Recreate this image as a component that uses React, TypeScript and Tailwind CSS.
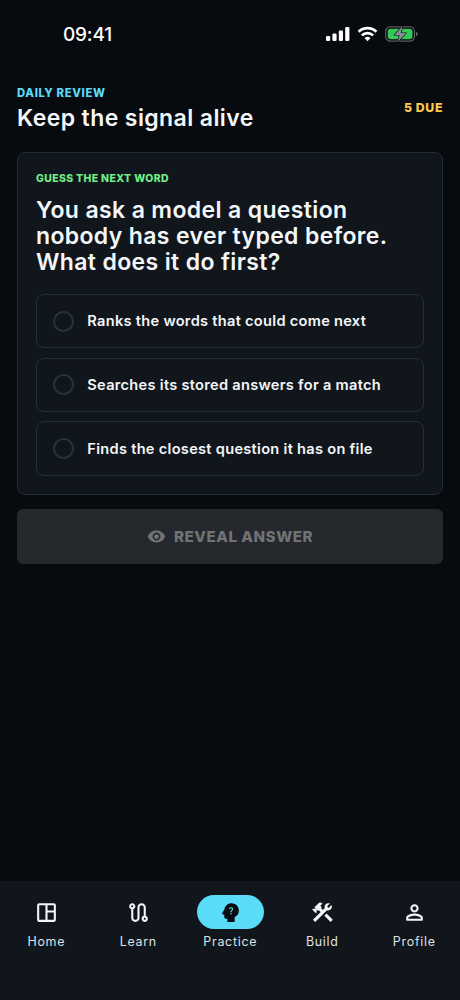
import React, { useState } from "react";
import type { IconType } from "react-icons";
import {
  MdConstruction,
  MdOutlineRoute,
  MdOutlineSpaceDashboard,
  MdPsychologyAlt,
  MdVisibility,
} from "react-icons/md";

interface Tab {
  label: string;
  icon: IconType;
}

const PersonIcon: IconType = ({ size = 24 }) => (
  <svg width={size} height={size} viewBox="0 0 24 24" fill="currentColor">
    <path d="M12 6c1.1 0 2 .9 2 2s-.9 2-2 2-2-.9-2-2 .9-2 2-2m0 9c2.7 0 5.8 1.29 6 2v1H6v-.99c.2-.72 3.3-2.01 6-2.01m0-11C9.79 4 8 5.79 8 8s1.79 4 4 4 4-1.79 4-4-1.79-4-4-4zm0 9c-2.67 0-8 1.34-8 4v2c0 .55.45 1 1 1h14c.55 0 1-.45 1-1v-2c0-2.66-5.33-4-8-4z" />
  </svg>
);

const tabs: Tab[] = [
  { label: "Home", icon: MdOutlineSpaceDashboard },
  { label: "Learn", icon: MdOutlineRoute },
  { label: "Practice", icon: MdPsychologyAlt },
  { label: "Build", icon: MdConstruction },
  { label: "Profile", icon: PersonIcon },
];

const answers = [
  "Ranks the words that could come next",
  "Searches its stored answers for a match",
  "Finds the closest question it has on file",
];

const StatusBar = () => (
  <div className="flex h-[68px] shrink-0 items-center justify-between pl-[63px] pr-[42px]">
    <span className="pt-px text-[19px] font-medium leading-6 tracking-[-0.2px] text-white">09:41</span>
    <div className="flex items-center gap-[7.5px]">
      <svg width="24" height="16" viewBox="0 0 24 16" fill="#fff">
        <rect x="0" y="10" width="4.2" height="5" rx="1.2" />
        <rect x="6.4" y="7.5" width="4.2" height="7.5" rx="1.2" />
        <rect x="12.8" y="4.5" width="4.2" height="10.5" rx="1.2" />
        <rect x="19.2" y="1" width="4.2" height="14" rx="1.2" />
      </svg>
      <svg width="20" height="16" viewBox="0.5 0 20 16" fill="none" stroke="#fff" strokeWidth="2.7">
        <path d="M1.1 5.8a12.7 12.7 0 0 1 17.8 0" />
        <path d="M4.4 9.4a8 8 0 0 1 11.2 0" />
        <path d="M10 15.2 7 12.1a4.4 4.4 0 0 1 6 0z" fill="#fff" stroke="none" />
      </svg>
      <svg width="33" height="16" viewBox="0 0 33 16">
        <rect x="0.7" y="0.9" width="28.8" height="14.2" rx="4.6" fill="none" stroke="#5b5e62" strokeWidth="1.2" />
        <path d="M31 5.9c1.1.4 1.6 1.2 1.6 2.2s-.5 1.8-1.6 2.2z" fill="#6b6e72" />
        <rect x="2.7" y="2.8" width="24.8" height="10.4" rx="3" fill="#34c759" />
        <path
          d="M17.6 0 9.4 9h5.2l-1.8 7L21 7h-5.2z"
          fill="#8b8e91"
          stroke="#070a0e"
          strokeWidth="1.2"
          paintOrder="stroke"
          strokeLinejoin="round"
        />
      </svg>
    </div>
  </div>
);

const App = () => {
  const [selected, setSelected] = useState<number | null>(null);

  return (
    <div className="flex h-[1000px] w-[460px] flex-col bg-[#070a0e] font-['Inter',sans-serif] text-[#f4f7fa]">
      <StatusBar />

      <main className="flex flex-1 flex-col px-[17px] pt-[17px]">
        <header className="flex items-center justify-between">
          <div>
            <p className="pt-px text-[11.3px] font-extrabold leading-[15px] tracking-[0.65px] text-[#5adbf7]">DAILY REVIEW</p>
            <h1 className="mt-[2px] text-[23px] font-semibold leading-[30px] tracking-[0.4px]">Keep the signal alive</h1>
          </div>
          <span className="mt-[-2px] text-[12.3px] font-extrabold leading-4 tracking-[0.6px] text-[#ffc94d]">5 DUE</span>
        </header>

        <section className="mt-[19px] h-[343px] rounded-[8px] border border-[#202c39] bg-[#11161c] px-[18px] pt-[18px]">
          <p className="text-[10.4px] font-extrabold leading-4 tracking-[0.4px] text-[#73ed85]">GUESS THE NEXT WORD</p>
          <h2 className="mt-[10px] whitespace-nowrap text-[23px] font-semibold leading-[26.1px] tracking-[0.36px]">
            You ask a model a question
            <br />
            nobody has ever typed before.
            <br />
            What does it do first?
          </h2>
          <div className="mt-[18.9px] flex flex-col gap-[9.3px]">
            {answers.map((answer, index) => (
              <button
                key={answer}
                onClick={() => setSelected(index)}
                className="flex h-[54.3px] items-center gap-[13.5px] rounded-[8px] border border-[#232f3c] px-[15.8px] text-left"
              >
                <span className="flex size-[21px] items-center justify-center rounded-full border-2 border-[#263442]">
                  {selected === index && <span className="size-[9px] rounded-full bg-[#5adbf7]" />}
                </span>
                <span className="whitespace-nowrap pt-[2px] text-[14.6px] font-semibold tracking-[0.29px]">{answer}</span>
              </button>
            ))}
          </div>
        </section>

        <button
          disabled={selected === null}
          className="mt-[14px] flex h-[55px] items-center justify-center gap-[8px] rounded-[6px] bg-[#25282c] text-[#707376]"
        >
          <MdVisibility size={19} />
          <span className="pt-px text-[15.2px] font-extrabold tracking-[0.5px]">REVEAL ANSWER</span>
        </button>
      </main>

      <nav className="grid h-[119px] shrink-0 grid-cols-5 bg-[#11161c] pt-[14px]">
        {tabs.map(({ label, icon: Icon }) => (
          <button key={label} className="flex flex-col items-center">
            <span
              className={
                label === "Practice"
                  ? "flex h-[34px] w-[67px] items-center justify-center rounded-full bg-[#5adbf7] text-[#070a0e]"
                  : "flex h-[34px] w-[67px] items-center justify-center text-[#f4f7fa]"
              }
            >
              <Icon size={25} />
            </span>
            <span className="mt-[5px] pl-[0.6px] text-[12.4px] font-normal leading-4 tracking-[0.75px] text-[#dfe2e5]">
              {label}
            </span>
          </button>
        ))}
      </nav>
    </div>
  );
};

export default App;
